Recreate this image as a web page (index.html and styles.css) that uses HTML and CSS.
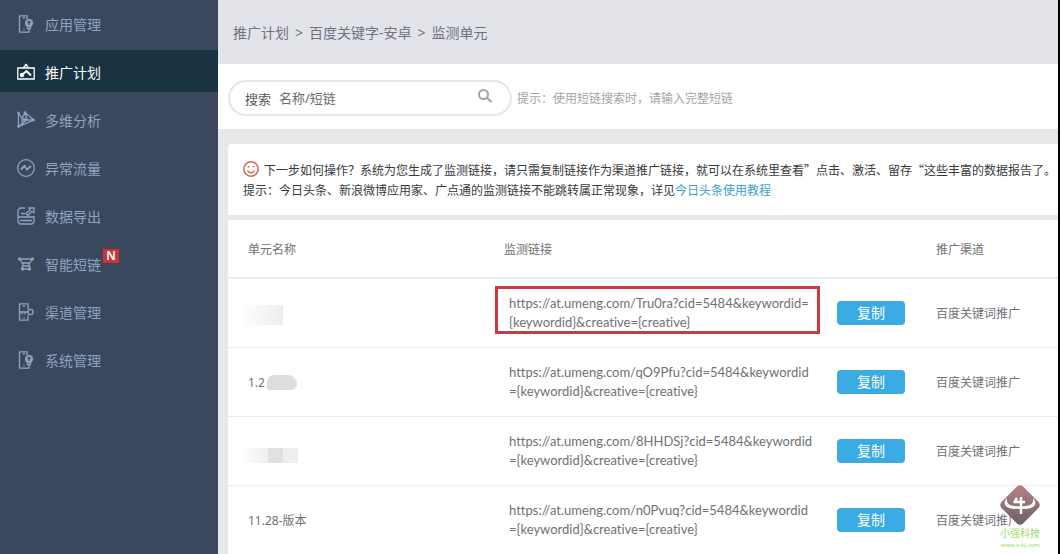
FILE: index.html
```html
<!DOCTYPE html>
<html lang="zh-CN">
<head>
<meta charset="utf-8">
<title>监测单元</title>
<link rel="stylesheet" href="styles.css">
</head>
<body>
<div class="app">
  <nav class="sidebar">
    <a class="nav-item" href="#"><svg class="icon" viewBox="0 0 18 18"><path d="M10 4V.8H2.500v16.400H12V13M6 3h2M6.500 14.500h1"/><circle class="solid" cx="12" cy="8" r="4"/><path d="M10.500 11v2.500h3V11"/><path class="cut" d="M10.500 7h3M12 6v4"/></svg>应用管理</a>
    <a class="nav-item active" href="#" aria-current="page"><svg class="icon" viewBox="0 0 18 18"><path d="M.8 5h16.400v11H.8zM6 5l3-3 3 3"/><path d="M6 11l3.500-3L14 12.500" stroke-width="2"/><circle class="solid" cx="5" cy="12" r="2.200"/><circle class="solid" cx="9" cy="2" r="1.300"/></svg>推广计划</a>
    <a class="nav-item" href="#"><svg class="icon" viewBox="0 0 18 18"><path d="M1.500 2v13.500L17 9 8 1.500 5 7zM5 7v6M5 7l5 2-8.500 6.500M8 1.500L10 9h7"/><circle class="solid" cx="1.500" cy="2" r="1.300"/><circle class="solid" cx="8" cy="1.500" r="1.300"/><circle class="solid" cx="1.500" cy="15.500" r="1.300"/><circle class="solid" cx="16.500" cy="9" r="1.300"/><circle class="solid" cx="7" cy="9" r="1.500"/></svg>多维分析</a>
    <a class="nav-item" href="#"><svg class="icon" viewBox="0 0 18 18"><circle cx="9" cy="9" r="8.300"/><path d="M4 10.500L7.500 7l2.500 3.500L14 7" stroke-width="1.800"/></svg>异常流量</a>
    <a class="nav-item" href="#"><svg class="icon" viewBox="0 0 18 18"><path d="M8 1H3L1 3v12l2 2h12l2-2V9M1 10h16M4 6.500h4M3 13.500h12M12 1h5v4.500L14.500 4.500 11 8.500 9 6.500l4-3.500z"/></svg>数据导出</a>
    <a class="nav-item" href="#"><svg class="icon" viewBox="0 0 18 18"><path d="M3 4h12M4.500 8h9M5 11h8M6 14h6M3 4.500L6 9 5 14M15 4.500L12 9l1 5"/><circle cx="2.500" cy="4" r="1"/><circle cx="15.500" cy="4" r="1"/><circle cx="5.500" cy="14" r="1"/><circle cx="12.500" cy="14" r="1"/></svg><span class="nav-label">智能短链<span class="badge">N</span></span></a>
    <a class="nav-item" href="#"><svg class="icon" viewBox="0 0 18 18"><path d="M11 6V.8H2.500v16.400H11V12M2.500 9H11M5 9v2.500M8 9v2.500M6 3h2M6.500 15h1"/><circle cx="13.500" cy="9" r="2.600"/></svg>渠道管理</a>
    <a class="nav-item" href="#"><svg class="icon" viewBox="0 0 18 18"><path d="M10 4V.8H2.500v16.400H12V13M6 3h2M6.500 14.500h1"/><circle class="solid" cx="12" cy="8" r="4"/><path d="M10.500 11v2.500h3V11"/><path class="cut" d="M10.500 7h3M12 6v4"/></svg>系统管理</a>
  </nav>
  <main class="main">
    <header class="crumbs"><a href="#">推广计划</a><span>&gt;</span><a href="#">百度关键字-安卓</a><span>&gt;</span><span>监测单元</span></header>
    <form class="search-bar">
      <div class="search-box">
        <label for="search">搜索</label>
        <input id="search" type="text" placeholder="名称/短链">
        <button class="search-btn" type="button" aria-label="搜索"><svg viewBox="0 0 14 14"><circle cx="5.500" cy="5.500" r="4.500"/><path d="M9 9l4.500 4"/></svg></button>
      </div>
      <span class="hint">提示：使用短链搜索时，请输入完整短链</span>
    </form>
    <section class="notice">
      <p><svg class="smile" viewBox="0 0 16 16"><circle cx="8" cy="8" r="7.200"/><path d="M4.500 9.500c1.500 3 5.500 3 7 0"/><path d="M5.500 5v1.500M10.500 5v1.500"/></svg>下一步如何操作？系统为您生成了监测链接，请只需复制链接作为渠道推广链接，就可以在系统里查看”点击、激活、留存“这些丰富的数据报告了。</p>
      <p>提示：今日头条、新浪微博应用家、广点通的监测链接不能跳转属正常现象，详见<a href="#">今日头条使用教程</a></p>
    </section>
    <table class="units">
      <colgroup><col class="col-name"><col class="col-link"><col class="col-copy"><col></colgroup>
      <thead><tr><th>单元名称</th><th colspan="2">监测链接</th><th>推广渠道</th></tr></thead>
      <tbody>
        <tr><td><span class="mask mask-a"></span></td><td class="link"><div class="marked">https://at.umeng.com/Tru0ra?cid=5484&amp;keywordid=<br>{keywordid}&amp;creative={creative}</div></td><td><button class="copy" type="button">复制</button></td><td>百度关键词推广</td></tr>
        <tr><td><div class="unit">1.2<span class="mask mask-b"></span></div></td><td class="link">https://at.umeng.com/qO9Pfu?cid=5484&amp;keywordid<br>={keywordid}&amp;creative={creative}</td><td><button class="copy" type="button">复制</button></td><td>百度关键词推广</td></tr>
        <tr><td><span class="mask mask-c"></span></td><td class="link">https://at.umeng.com/8HHDSj?cid=5484&amp;keywordid<br>={keywordid}&amp;creative={creative}</td><td><button class="copy" type="button">复制</button></td><td>百度关键词推广</td></tr>
        <tr><td><div class="unit">11.28-版本</div></td><td class="link">https://at.umeng.com/n0Pvuq?cid=5484&amp;keywordid<br>={keywordid}&amp;creative={creative}</td><td><button class="copy" type="button">复制</button></td><td>百度关键词推广</td></tr>
      </tbody>
    </table>
  </main>
  <div class="watermark">
    <svg viewBox="0 0 40 40"><defs><linearGradient id="wm" x1="0" y1="0" x2="0" y2="1"><stop offset="0" stop-color="#b57a7c"/><stop offset="1" stop-color="#625a5e"/></linearGradient></defs><path fill="url(#wm)" d="M17 1.500q3-2.500 6 0L38.500 17q2.500 3 0 6L23 38.500q-3 2.500-6 0L1.500 23q-2.500-3 0-6z"/><path fill="#fff" d="M7 13c-5 5-2 11 8 11v-3c-6 0-9-3-8-8zM33 13c5 5 2 11-8 11v-3c6 0 9-3 8-8z"/><path fill="none" stroke="#fff" stroke-width="2.500" d="M17 13l-3 5M15 17h10M14 22.500h12M21 12v17"/></svg>
    <span class="wm-name">小强科技</span>
    <span class="wm-url">www.x-kj.com</span>
  </div>
</div>
</body>
</html>
```
FILE: styles.css
```css
* { box-sizing: border-box; }
body {
  margin: 0;
  font-family: "Noto Sans", "Noto Sans CJK SC", sans-serif;
  font-size: 12px;
  color: #6f7174;
}
a { color: inherit; text-decoration: none; }
button, input { font: inherit; }
.app {
  position: relative;
  display: flex;
  min-height: 100vh;
  overflow: hidden;
  background: #e7e8ea;
  border-right: 2px solid #000;
}
.sidebar {
  flex: 0 0 218px;
  display: flex;
  flex-direction: column;
  gap: 6px;
  padding-top: 2px;
  background: #3a475d;
}
.nav-item {
  display: flex;
  align-items: center;
  gap: 10px;
  height: 42px;
  padding: 2px 17px 0;
  font-size: 14px;
  color: #8ea5c0;
}
.nav-item.active { background: #193343; color: #fff; }
.nav-label { position: relative; }
.icon {
  width: 18px;
  height: 18px;
  fill: none;
  stroke: currentColor;
  stroke-width: 1.3;
}
.icon .solid { fill: currentColor; stroke: none; }
.icon .cut { stroke: #3a475d; }
.badge {
  position: absolute;
  left: 58px;
  top: -5px;
  width: 16px;
  height: 14px;
  background: #cb3338;
  color: #fff;
  font-size: 12px;
  font-weight: 600;
  line-height: 14px;
  text-align: center;
}
.main { flex: 1; min-width: 0; }
.crumbs {
  display: flex;
  align-items: center;
  gap: 6px;
  height: 64px;
  padding-left: 15px;
  background: #e3e4ea;
  font-size: 14px;
  color: #6d7180;
}
.search-bar {
  display: flex;
  align-items: center;
  gap: 5px;
  height: 65px;
  padding: 3px 10px 0;
  background: #fff;
}
.search-box {
  display: flex;
  align-items: center;
  gap: 8px;
  width: 284px;
  height: 36px;
  padding: 0 18px 0 15px;
  border: 2px solid #e6e6e8;
  border-radius: 18px;
  font-size: 13px;
  color: #58595c;
}
.search-box input {
  flex: 1;
  min-width: 0;
  padding: 0;
  border: 0;
  outline: 0;
  background: none;
}
.search-box input::placeholder { color: #6b6c70; opacity: 1; }
.search-btn {
  width: 14px;
  height: 18px;
  padding: 0 0 4px;
  border: 0;
  background: none;
}
.search-btn svg {
  display: block;
  width: 14px;
  height: 14px;
  fill: none;
  stroke: #a2a3a7;
  stroke-width: 2;
}
.hint { color: #a3a4a7; }
.notice {
  margin: 15px 0 5px 10px;
  padding: 16px 0 15px 15px;
  background: #fff;
  border-radius: 4px 0 0 0;
  color: #38393b;
  font-family: "Noto Sans CJK SC", sans-serif;
  line-height: 20px;
  white-space: nowrap;
}
.notice p { display: flex; align-items: center; margin: 0; }
.notice a { color: #3ba0cb; }
.smile {
  width: 16px;
  height: 16px;
  margin: 0 5px 2px 0;
  fill: none;
  stroke: #d4674f;
  stroke-width: 1.5;
}
.units {
  width: calc(100% - 10px);
  margin-left: 10px;
  table-layout: fixed;
  border-collapse: separate;
  border-spacing: 0;
  background: #fff;
}
.col-name { width: 276px; }
.col-link { width: 333px; }
.col-copy { width: 99px; }
.units th {
  height: 59px;
  padding: 0;
  border-bottom: 2px solid #e9edef;
  font-weight: 400;
  text-align: left;
}
.units td {
  height: 69px;
  padding: 0;
  border-bottom: 1px solid #ebeced;
}
.units th:first-child, .units td:first-child { padding-left: 20px; }
.units .link {
  padding-left: 5px;
  font-family: Lato, "Noto Sans CJK SC", sans-serif;
  font-size: 13px;
  font-variant-ligatures: none;
  line-height: 19px;
  white-space: nowrap;
}
.marked { position: relative; }
.marked::after {
  content: "";
  position: absolute;
  inset: -8px 17px -2px -14px;
  border: 3px solid #cb3a42;
}
.unit { display: flex; align-items: center; gap: 2px; }
.copy {
  display: block;
  width: 68px;
  height: 24px;
  padding: 0;
  border: 0;
  border-radius: 4px;
  background: #3aabe3;
  color: #fff;
  font-size: 14px;
  line-height: 24px;
}
.mask { display: block; }
.mask-a {
  width: 40px;
  height: 20px;
  margin: 4px 0 0 -5px;
  background: linear-gradient(90deg, #fdfdfd, #f4f4f5 60%, #ededee);
}
.mask-b {
  width: 30px;
  height: 15px;
  border-radius: 7px 9px 6px 2px;
  background: #dcdddd;
}
.mask-c {
  width: 55px;
  height: 15px;
  margin: 8px 0 0 -5px;
  background: linear-gradient(90deg, #fcfcfc, #f0f0f1 45%, #e1e1e2 45%, #e1e1e2 72%, #eeeeee 72%);
}
.watermark {
  position: absolute;
  right: 16px;
  bottom: 6px;
  display: flex;
  flex-direction: column;
  align-items: center;
  width: 44px;
  color: #9bdb66;
}
.watermark svg { width: 40px; height: 40px; opacity: .95; }
.wm-name { font-size: 10px; line-height: 16px; }
.wm-url { font-size: 6px; line-height: 8px; }
```
